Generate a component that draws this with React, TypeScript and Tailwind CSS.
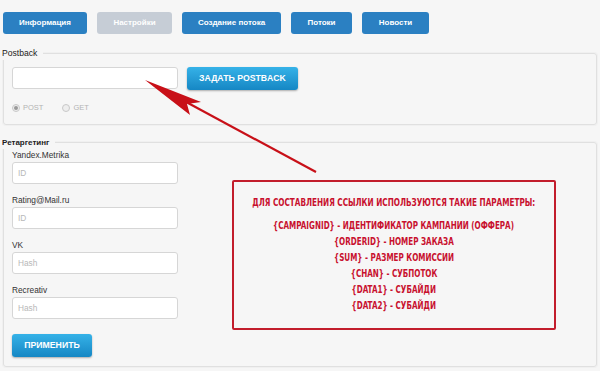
import React from 'react';

const tabs = [
  { label: 'Информация', w: 'w-[84px]', active: true },
  { label: 'Настройки', w: 'w-[75px]', active: false },
  { label: 'Создание потока', w: 'w-[99px]', active: true },
  { label: 'Потоки', w: 'w-[61px]', active: true },
  { label: 'Новости', w: 'w-[67px]', active: true },
];

const fields = [
  { label: 'Yandex.Metrika', placeholder: 'ID' },
  { label: 'Rating@Mail.ru', placeholder: 'ID' },
  { label: 'VK', placeholder: 'Hash' },
  { label: 'Recreativ', placeholder: 'Hash' },
];

const params = [
  '{CAMPAIGNID} - ИДЕНТИФИКАТОР КАМПАНИИ (ОФФЕРА)',
  '{ORDERID} - НОМЕР ЗАКАЗА',
  '{SUM} - РАЗМЕР КОМИССИИ',
  '{CHAN} - СУБПОТОК',
  '{DATA1} - СУБАЙДИ',
  '{DATA2} - СУБАЙДИ',
];

const Radio = ({ label, checked }: { label: string; checked?: boolean }) => (
  <label className="flex items-center gap-[3px] text-[7.5px] leading-[12px] text-[#b4b4b4]">
    <span className="w-[8px] h-[8px] rounded-full border border-[#c8c8c8] bg-[#eeeeee] flex items-center justify-center">
      {checked && <span className="w-[4px] h-[4px] rounded-full bg-[#999]" />}
    </span>
    {label}
  </label>
);

const BlueButton = ({ children, w }: { children: React.ReactNode; w: string }) => (
  <button
    className={`${w} h-[23px] rounded-[3px] bg-gradient-to-b from-[#35b2e8] to-[#1587c4] text-white text-[8.7px] font-bold uppercase shadow-[0_1px_2px_rgba(0,0,0,0.3)]`}
  >
    {children}
  </button>
);

// legend that sits on the box's top border
const Legend = ({ children, bold }: { children: React.ReactNode; bold?: boolean }) => (
  <div
    className={`-mt-[7px] -ml-[10px] w-fit pr-[6px] bg-[#f6f6f6] leading-[13px] text-[#222] ${
      bold ? 'text-[8px] font-bold' : 'text-[8.6px]'
    }`}
  >
    {children}
  </div>
);

export default function App() {
  return (
    <div className="relative w-[600px] h-[371px] overflow-hidden bg-[#f6f6f6] font-['Liberation_Sans',Arial,sans-serif] text-[#333]">
      {/* top menu */}
      <div className="flex gap-[10px] pl-[3px] pt-[12px]">
        {tabs.map((t) => (
          <button
            key={t.label}
            className={`${t.w} h-[22px] rounded-[3px] text-[8px] font-bold text-white ${
              t.active ? 'bg-[#2b80c2]' : 'bg-[#c6cdd6]'
            }`}
          >
            {t.label}
          </button>
        ))}
      </div>

      {/* postback */}
      <div className="ml-[3px] mt-[19px] w-[594px] border border-[#e0e0e0] rounded-[3px] pl-[8px] pb-[10px] shadow-[0_0_0_1px_#f0f0f0]">
        <Legend>Postback</Legend>
        <div className="flex gap-[9px] mt-[7px]">
          <input className="w-[166px] h-[22px] rounded-[3px] border border-[#d6d6d6] bg-white" />
          <BlueButton w="w-[111px]">Задать postback</BlueButton>
        </div>
        <div className="flex gap-[19px] mt-[12px]">
          <Radio label="POST" checked />
          <Radio label="GET" />
        </div>
      </div>

      {/* retargeting */}
      <div className="ml-[3px] mt-[17px] w-[594px] border border-[#e0e0e0] rounded-[3px] pl-[8px] pb-[9px] shadow-[0_0_0_1px_#f0f0f0]">
        <Legend bold>Ретаргетинг</Legend>
        <div className="flex flex-col gap-[9px] -mt-[1px]">
          {fields.map((f) => (
            <div key={f.label} className="flex flex-col">
              <span className="text-[8.3px] leading-[14px] text-[#333]">{f.label}</span>
              <input
                placeholder={f.placeholder}
                className="w-[166px] h-[22px] rounded-[3px] border border-[#d6d6d6] bg-white px-[5px] text-[8.3px] placeholder:text-[#b8b8b8]"
              />
            </div>
          ))}
        </div>
        <div className="mt-[12px]">
          <BlueButton w="w-[80px]">Применить</BlueButton>
        </div>
      </div>

      {/* annotation box */}
      <div className="absolute left-[232px] top-[180px] w-[324px] h-[150px] border-2 border-[#c21d2c] rounded-[2px] flex flex-col items-center pt-[14px] font-['DejaVu_Sans_Condensed','Roboto',sans-serif] font-bold text-[#c8102e] text-[10px] whitespace-nowrap">
        <div className="leading-[14px] scale-x-[0.81]">ДЛЯ СОСТАВЛЕНИЯ ССЫЛКИ ИСПОЛЬЗУЮТСЯ ТАКИЕ ПАРАМЕТРЫ:</div>
        <div className="mt-[8px] flex flex-col items-center">
          {params.map((p) => (
            <div key={p} className="leading-[15.9px] scale-x-[0.8]">{p}</div>
          ))}
        </div>
      </div>

      {/* arrow */}
      <svg className="absolute left-0 top-0 pointer-events-none" width="600" height="371">
        <line x1="188" y1="103" x2="316" y2="172" stroke="#c81018" strokeWidth="2.2" />
        <polygon points="145,80 201,102 187,104 190,115" fill="#c81018" />
      </svg>
    </div>
  );
}
